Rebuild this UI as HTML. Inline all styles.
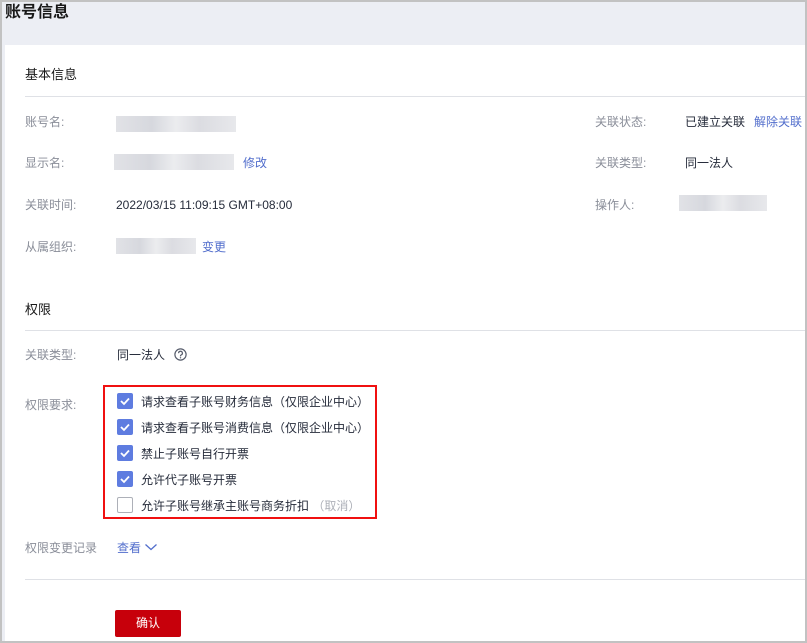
<!DOCTYPE html>
<html><head><meta charset="utf-8"><style>
*{margin:0;padding:0;box-sizing:border-box}
html,body{width:807px;height:643px;overflow:hidden;background:#fff}
body{font-family:"Liberation Sans","Noto Sans CJK SC",sans-serif;font-size:12px;color:#252b3a;position:relative}
.frame{position:absolute;left:0;top:0;width:807px;height:643px;border:2px solid #c2c2c2;border-right-width:2px}
.hdr{position:absolute;left:2px;top:2px;width:803px;height:43px;background:#eceef4}
.strip{position:absolute;left:2px;top:45px;width:3px;height:596px;background:#eceef4}
.t{position:absolute;white-space:nowrap;line-height:16px}
.lab{color:#8a8e99}
.lnk{color:#526ecc}
.line{position:absolute;height:1px;background:#dfe1e6}
.blur{position:absolute;background:linear-gradient(90deg,#dcdde2,#cfd1d8 30%,#e8e9ec 50%,#d5d6dc 70%,#e3e4e8);opacity:.85}
.cb{position:absolute;left:117px;width:16px;height:16px;border-radius:2px;background:#5e7ce0}
.cb svg{position:absolute;left:2px;top:2px}
.cb.off{background:#fff;border:1px solid #adb0b8}
</style></head><body>
<div class="hdr"></div>
<div class="strip"></div>
<div class="t" style="left:5px;top:3px;font-size:16px;line-height:20px;color:#191919;font-weight:bold">账号信息</div>

<div class="t" style="left:25px;top:67px;font-size:13px;color:#191919">基本信息</div>
<div class="line" style="left:25px;top:96px;width:782px"></div>

<div class="t lab" style="left:25px;top:114px">账号名:</div>
<div class="blur" style="left:116px;top:116px;width:120px;height:16px"></div>
<div class="t lab" style="left:25px;top:155px">显示名:</div>
<div class="blur" style="left:114px;top:154px;width:120px;height:16px"></div>
<div class="t lnk" style="left:243px;top:155px">修改</div>
<div class="t lab" style="left:25px;top:197px">关联时间:</div>
<div class="t" style="left:116px;top:197px">2022/03/15 11:09:15 GMT+08:00</div>
<div class="t lab" style="left:25px;top:239px">从属组织:</div>
<div class="blur" style="left:116px;top:238px;width:80px;height:16px"></div>
<div class="t lnk" style="left:202px;top:239px">变更</div>

<div class="t lab" style="left:595px;top:114px">关联状态:</div>
<div class="t" style="left:685px;top:114px">已建立关联</div>
<div class="t lnk" style="left:754px;top:114px">解除关联</div>
<div class="t lab" style="left:595px;top:155px">关联类型:</div>
<div class="t" style="left:685px;top:155px">同一法人</div>
<div class="t lab" style="left:595px;top:197px">操作人:</div>
<div class="blur" style="left:679px;top:195px;width:88px;height:16px"></div>

<div class="t" style="left:25px;top:302px;font-size:13px;color:#191919">权限</div>
<div class="line" style="left:25px;top:330px;width:782px"></div>

<div class="t lab" style="left:25px;top:347px">关联类型:</div>
<div class="t" style="left:117px;top:347px">同一法人</div>
<svg style="position:absolute;left:174px;top:348px" width="13" height="13" viewBox="0 0 13 13"><circle cx="6.5" cy="6.5" r="5.6" fill="none" stroke="#575d6c" stroke-width="1.2"/><path d="M4.6 5.2a1.9 1.9 0 1 1 2.6 1.7c-.5.2-.7.5-.7 1v.5" fill="none" stroke="#575d6c" stroke-width="1.2"/><circle cx="6.5" cy="9.8" r=".7" fill="#575d6c"/></svg>

<div class="t lab" style="left:25px;top:397px">权限要求:</div>
<div style="position:absolute;left:103px;top:385px;width:274px;height:134px;border:2px solid #f01010"></div>

<div class="cb" style="top:393px"><svg width="12" height="12"><path d="M2 6l3 3 5-5.5" fill="none" stroke="#fff" stroke-width="1.8"/></svg></div>
<div class="t" style="left:141px;top:394px">请求查看子账号财务信息（仅限企业中心）</div>
<div class="cb" style="top:419px"><svg width="12" height="12"><path d="M2 6l3 3 5-5.5" fill="none" stroke="#fff" stroke-width="1.8"/></svg></div>
<div class="t" style="left:141px;top:420px">请求查看子账号消费信息（仅限企业中心）</div>
<div class="cb" style="top:445px"><svg width="12" height="12"><path d="M2 6l3 3 5-5.5" fill="none" stroke="#fff" stroke-width="1.8"/></svg></div>
<div class="t" style="left:141px;top:446px">禁止子账号自行开票</div>
<div class="cb" style="top:471px"><svg width="12" height="12"><path d="M2 6l3 3 5-5.5" fill="none" stroke="#fff" stroke-width="1.8"/></svg></div>
<div class="t" style="left:141px;top:472px">允许代子账号开票</div>
<div class="cb off" style="top:497px"></div>
<div class="t" style="left:141px;top:498px">允许子账号继承主账号商务折扣 <span style="color:#adb0b8">（取消）</span></div>

<div class="t lab" style="left:25px;top:540px">权限变更记录</div>
<div class="t lnk" style="left:117px;top:540px">查看</div>
<svg style="position:absolute;left:144px;top:542px" width="14" height="10"><path d="M1.5 2.5l5.5 5 5.5-5" fill="none" stroke="#526ecc" stroke-width="1.3"/></svg>

<div class="line" style="left:25px;top:579px;width:782px"></div>

<div style="position:absolute;left:115px;top:610px;width:66px;height:27px;background:#c7000b;border-radius:2px;color:#fff;text-align:center;line-height:27px;font-size:12px">确认</div>
<div class="frame"></div>
</body></html>
